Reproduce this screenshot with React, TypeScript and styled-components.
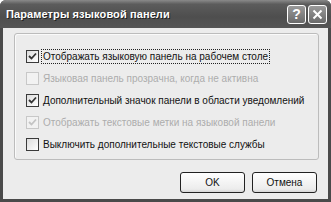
import React from 'react'
import styled, { createGlobalStyle } from 'styled-components'

const GlobalStyle = createGlobalStyle`
  html, body {
    margin: 0;
    padding: 0;
    background: #ffffff;
  }
  body {
    font-family: "Liberation Sans", Arial, sans-serif;
    font-size: 11px;
  }
`

const Window = styled.div`
  width: 331px;
  height: 202px;
  box-sizing: border-box;
  display: flex;
  flex-direction: column;
  background: #4a4a4a;
  padding: 0 3px 3px 3px;
  border-radius: 6px 6px 0 0;
`

const TitleBar = styled.div`
  height: 28px;
  display: flex;
  align-items: center;
  justify-content: space-between;
  background: linear-gradient(to bottom, #8a8a8a 0%, #5c5c5c 15%, #4e4e4e 60%, #555555 100%);
  margin: 0 -3px;
  padding-left: 6px;
  padding-right: 4px;
  border-radius: 6px 6px 0 0;
`

const Title = styled.span`
  color: #ffffff;
  font-weight: bold;
  font-size: 11px;
  letter-spacing: 0.1px;
  font-family: "Liberation Sans", Arial, sans-serif;
  text-shadow: 1px 1px 0 #222;
`

const TitleButtons = styled.div`
  display: flex;
  gap: 2px;
`

const TitleButton = styled.div`
  width: 19px;
  height: 19px;
  box-sizing: border-box;
  border: 1px solid #ffffff;
  border-radius: 3px;
  background: linear-gradient(to bottom, #9a9a9a, #6a6a6a);
  color: #ffffff;
  display: flex;
  align-items: center;
  justify-content: center;
  font-weight: bold;
  font-size: 14px;
  font-family: "Liberation Sans", Arial, sans-serif;
`

const Body = styled.div`
  flex: 1;
  background: #ececec;
  display: flex;
  flex-direction: column;
  padding: 5px 9px 6px 11px;
`

const Group = styled.div`
  border: 1px solid #bcbcbc;
  border-radius: 3px;
  box-shadow: inset 1px 1px 0 #fafafa;
  height: 127px;
  box-sizing: border-box;
  display: flex;
  flex-direction: column;
  padding: 16px 0 0 11px;
  gap: 9px;
`

const Row = styled.label<{ $disabled?: boolean }>`
  display: flex;
  align-items: center;
  gap: 3px;
  height: 13px;
  color: ${p => (p.$disabled ? '#acacac' : '#111111')};
  font-family: "Liberation Sans", Arial, sans-serif;
  font-size: 10px;
  white-space: nowrap;
`

const Box = styled.span<{ $disabled?: boolean }>`
  width: 13px;
  height: 13px;
  box-sizing: border-box;
  border: 1px solid ${p => (p.$disabled ? '#c8c8c8' : '#3a3a3a')};
  background: ${p => (p.$disabled ? '#f2f2f2' : 'linear-gradient(135deg, #dcdcdc, #ffffff)')};
  display: flex;
  align-items: center;
  justify-content: center;
  flex-shrink: 0;
`

const Label = styled.span<{ $focused?: boolean }>`
  outline: ${p => (p.$focused ? '1px dotted #222' : 'none')};
  padding: 0 1px;
  line-height: 13px;
`

const Footer = styled.div`
  display: flex;
  justify-content: flex-end;
  gap: 7px;
  margin-top: 12px;
  padding-right: 2px;
`

const Button = styled.div`
  width: 65px;
  height: 21px;
  box-sizing: border-box;
  border: 1px solid #222;
  border-radius: 3px;
  background: linear-gradient(to bottom, #ffffff, #ececec 85%, #d6d6d6);
  display: flex;
  align-items: center;
  justify-content: center;
  font-family: "Liberation Sans", Arial, sans-serif;
  font-size: 10px;
  color: #111;
`

const Check = ({ disabled }: { disabled?: boolean }) => (
  <svg width="9" height="9" viewBox="0 0 9 9">
    <path d="M1 4 L3.5 6.5 L8 1.5" fill="none" stroke={disabled ? '#c4c4c4' : '#333'} strokeWidth="1.8" />
  </svg>
)

const items = [
  { text: 'Отображать языковую панель на рабочем столе', checked: true, focused: true },
  { text: 'Языковая панель прозрачна, когда не активна', disabled: true },
  { text: 'Дополнительный значок панели в области уведомлений', checked: true },
  { text: 'Отображать текстовые метки на языковой панели', checked: true, disabled: true },
  { text: 'Выключить дополнительные текстовые службы', checked: false },
]

export default function App() {
  return (
    <>
      <GlobalStyle />
      <Window>
        <TitleBar>
          <Title>Параметры языковой панели</Title>
          <TitleButtons>
            <TitleButton>?</TitleButton>
            <TitleButton>
              <svg width="11" height="11" viewBox="0 0 11 11">
                <path d="M1.5 1.5 L9.5 9.5 M9.5 1.5 L1.5 9.5" stroke="#fff" strokeWidth="2" />
              </svg>
            </TitleButton>
          </TitleButtons>
        </TitleBar>
        <Body>
          <Group>
            {items.map(it => (
              <Row key={it.text} $disabled={it.disabled}>
                <Box $disabled={it.disabled}>{it.checked && <Check disabled={it.disabled} />}</Box>
                <Label $focused={it.focused}>{it.text}</Label>
              </Row>
            ))}
          </Group>
          <Footer>
            <Button>OK</Button>
            <Button>Отмена</Button>
          </Footer>
        </Body>
      </Window>
    </>
  )
}
